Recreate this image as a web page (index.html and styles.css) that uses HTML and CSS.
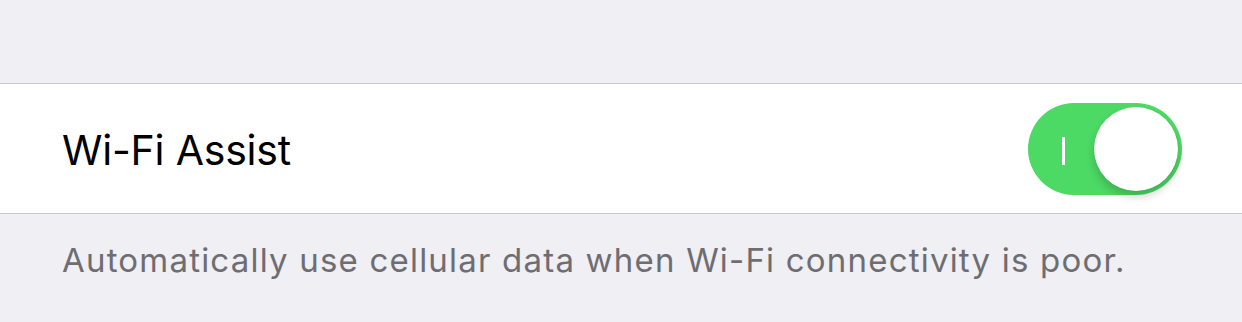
FILE: index.html
```html
<!DOCTYPE html>
<html>
<head>
<meta charset="utf-8">
<link rel="stylesheet" href="styles.css">
</head>
<body>
<div class="page">
  <div class="spacer"></div>
  <div class="cell">
    <span class="label">Wi-Fi Assist</span>
    <div class="switch">
      <span class="on-mark"></span>
      <span class="knob"></span>
    </div>
  </div>
  <div class="footer">Automatically use cellular data when Wi-Fi connectivity is poor.</div>
</div>
</body>
</html>
```
FILE: styles.css
```css
html, body {
  margin: 0;
  padding: 0;
  background: #efeff4;
}
.page {
  width: 1242px;
  height: 322px;
  font-family: Inter, "Liberation Sans", sans-serif;
  overflow: hidden;
}
.spacer {
  height: 83px;
}
.cell {
  height: 129px;
  background: #fff;
  border-top: 1px solid #c8c7cc;
  border-bottom: 1px solid #c8c7cc;
  display: flex;
  align-items: center;
  justify-content: space-between;
  padding: 0 60px 0 62px;
}
.label {
  font-size: 41px;
  letter-spacing: -0.2px;
  color: #000;
  margin-top: 3px;
}
.switch {
  position: relative;
  width: 154px;
  height: 92px;
  border-radius: 46px;
  background: #4cd964;
  margin-top: 1px;
}
.on-mark {
  position: absolute;
  left: 34px;
  top: 34px;
  width: 3px;
  height: 28px;
  background: #fff;
}
.knob {
  position: absolute;
  right: 4px;
  top: 4px;
  width: 84px;
  height: 84px;
  border-radius: 50%;
  background: #fff;
  box-shadow: 0 6px 8px rgba(0,0,0,0.18), 0 0 1px rgba(0,0,0,0.15);
}
.footer {
  padding: 26px 0 0 62px;
  font-size: 33px;
  letter-spacing: 1.2px;
  color: #6d6d72;
}
```
